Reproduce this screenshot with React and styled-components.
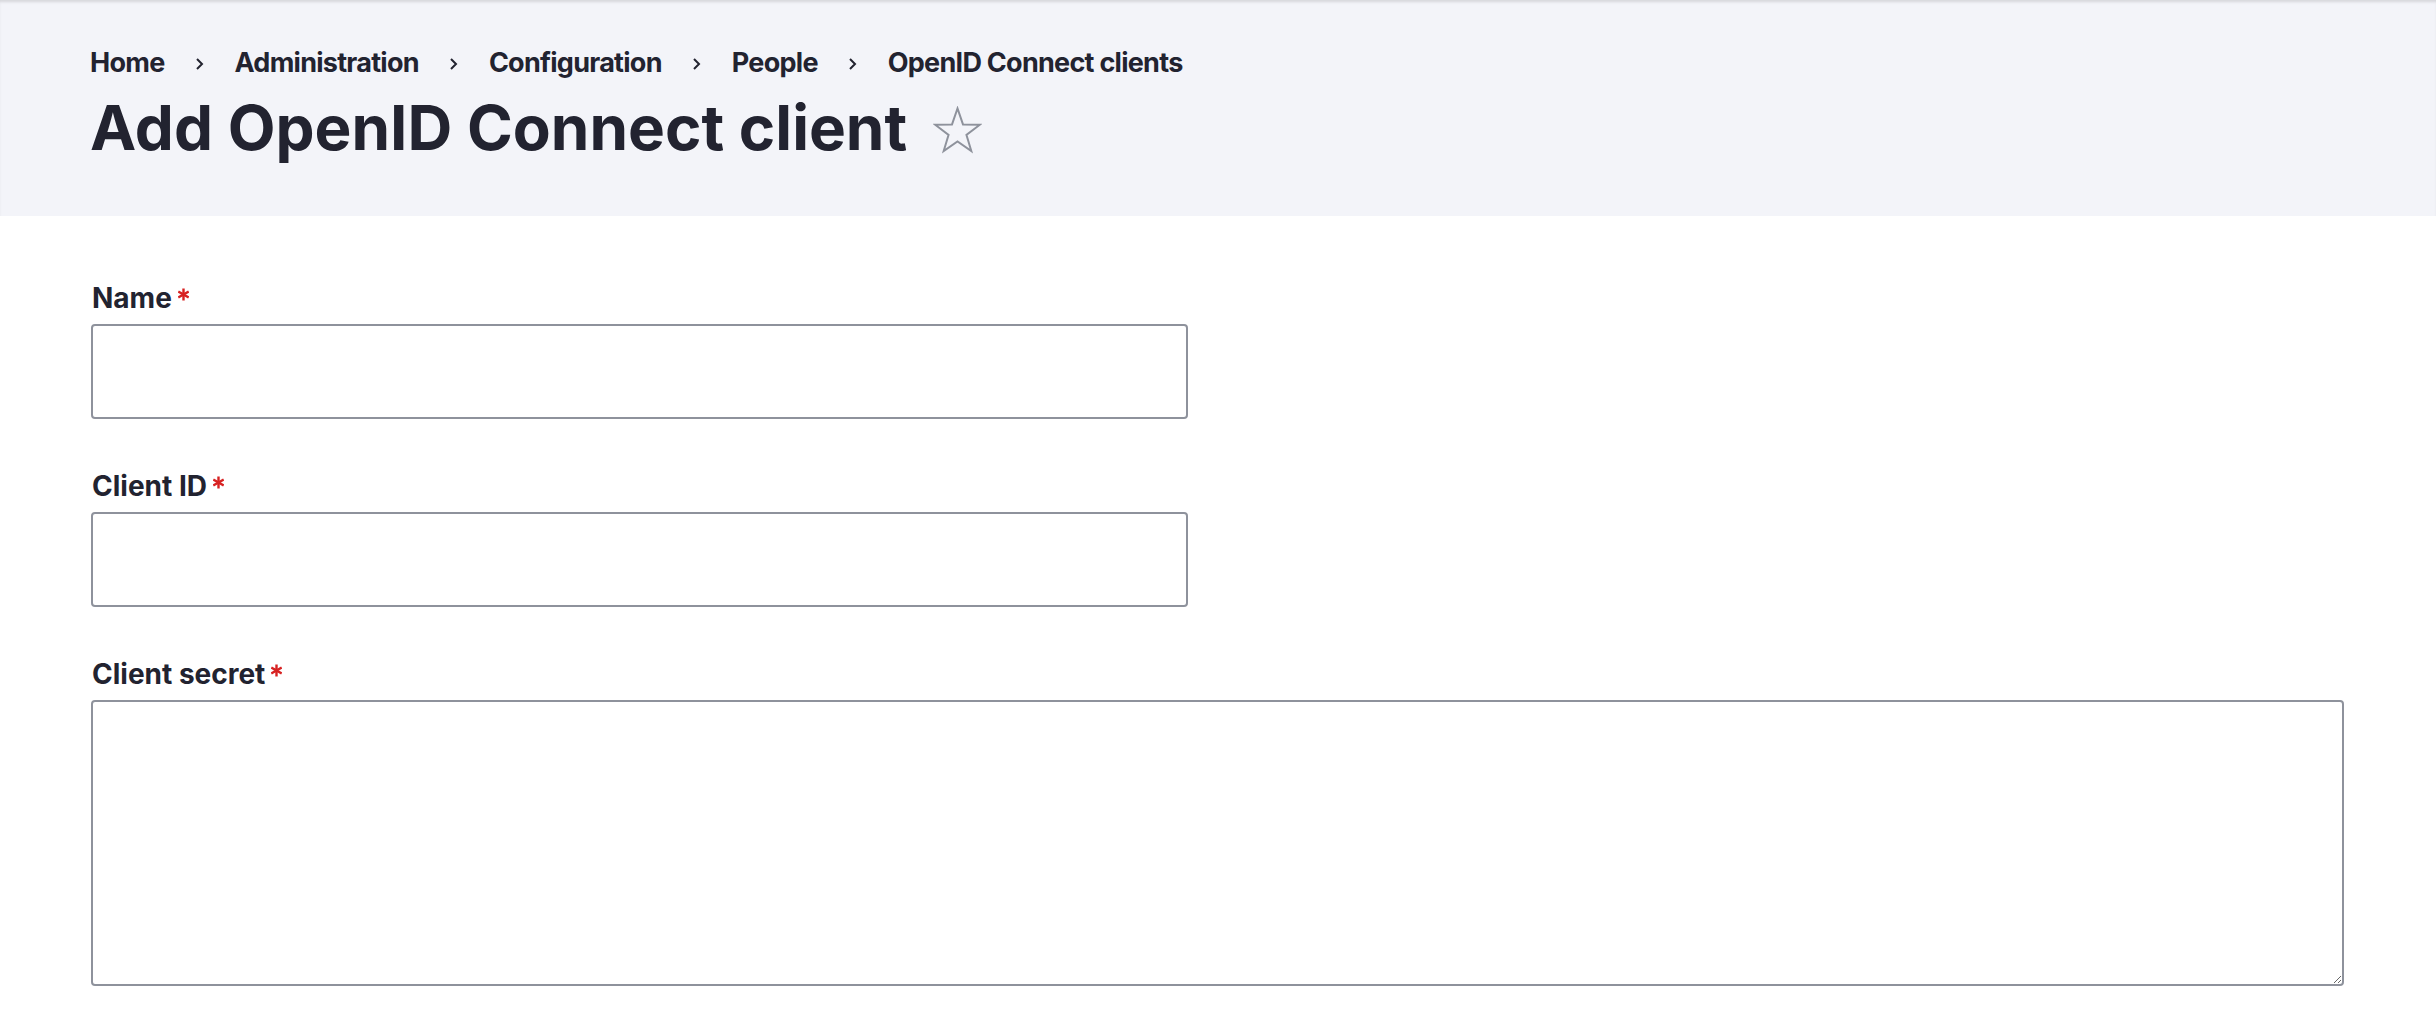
import React from "react";
import styled, { createGlobalStyle } from "styled-components";

const GlobalStyle = createGlobalStyle`
  html, body {
    margin: 0;
    padding: 0;
    background: #ffffff;
  }
  body {
    font-family: Inter, "Noto Sans", "Liberation Sans", sans-serif;
    color: #222330;
  }
`;

const Header = styled.header`
  background: #f3f4f9;
  box-shadow: inset 0 3px 3px -1px rgba(0, 0, 0, 0.12);
  height: 216px;
  box-sizing: border-box;
  padding: 49px 0 0 90px;
`;

const Crumbs = styled.ol`
  display: flex;
  align-items: center;
  gap: 31px;
  list-style: none;
  margin: 0;
  padding: 0;
  font-size: 27px;
  line-height: 27px;
  font-weight: 700;
  letter-spacing: -0.027em;
`;

const Crumb = styled.li`
  display: flex;
  align-items: center;
  gap: 30px;
`;

const Chevron = styled.svg`
  width: 9px;
  height: 14px;
  margin-top: 2px;
`;

const TitleRow = styled.div`
  display: flex;
  align-items: center;
  gap: 26px;
  margin-top: 21px;
`;

const Title = styled.h1`
  margin: 0;
  font-size: 62px;
  line-height: 62px;
  font-weight: 700;
  letter-spacing: 0;
`;

const Star = styled.svg`
  width: 49px;
  height: 48px;
  margin-top: 4px;
`;

const Form = styled.form`
  padding: 68px 0 40px 91px;
  display: flex;
  flex-direction: column;
  gap: 53px;
`;

const Field = styled.div`
  display: flex;
  flex-direction: column;
  gap: 12px;
`;

const Label = styled.label`
  display: flex;
  align-items: flex-start;
  gap: 6px;
  font-size: 28px;
  line-height: 28px;
  font-weight: 700;
  padding-left: 1px;
`;

const Required = styled.svg`
  width: 11px;
  height: 13px;
  margin-top: 4px;
`;

const TextInput = styled.input`
  box-sizing: border-box;
  width: ${(p) => p.$width}px;
  height: 95px;
  border: 2px solid #8e929c;
  border-radius: 4px;
  background: #fff;
  font: inherit;
  font-size: 28px;
  padding: 0 20px;
  outline: none;
`;

const TextArea = styled.textarea`
  box-sizing: border-box;
  width: 2253px;
  height: 286px;
  border: 2px solid #8e929c;
  border-radius: 4px;
  background: #fff;
  font: inherit;
  font-size: 28px;
  padding: 16px 20px;
  outline: none;
  resize: vertical;
`;

const crumbs = ["Home", "Administration", "Configuration", "People", "OpenID Connect clients"];

const Asterisk = () => (
  <Required viewBox="0 0 11 13" aria-hidden="true">
    <g stroke="#d72222" strokeWidth="2.4" strokeLinecap="butt">
      <line x1="5.5" y1="0.5" x2="5.5" y2="12.5" />
      <line x1="0.3" y1="3.5" x2="10.7" y2="9.5" />
      <line x1="0.3" y1="9.5" x2="10.7" y2="3.5" />
    </g>
  </Required>
);

const App = () => {
  return (
    <>
      <GlobalStyle />
      <Header>
        <Crumbs>
          {crumbs.map((c, i) => (
            <Crumb key={c}>
              <span>{c}</span>
              {i < crumbs.length - 1 && (
                <Chevron viewBox="0 0 9 14" aria-hidden="true">
                  <polyline points="2,2 7,7 2,12" fill="none" stroke="#222330" strokeWidth="2" />
                </Chevron>
              )}
            </Crumb>
          ))}
        </Crumbs>
        <TitleRow>
          <Title>Add OpenID Connect client</Title>
          <Star viewBox="0 0 50 48" aria-hidden="true">
            <polygon
              points="25,2 30.6,18.3 47.8,18.6 34.1,29 39.1,45.5 25,35.6 10.9,45.5 15.9,29 2.2,18.6 19.4,18.3"
              fill="none"
              stroke="#8e929c"
              strokeWidth="2"
              strokeLinejoin="miter"
            />
          </Star>
        </TitleRow>
      </Header>
      <Form>
        <Field>
          <Label htmlFor="name">
            <span>Name</span>
            <Asterisk />
          </Label>
          <TextInput id="name" $width={1097} />
        </Field>
        <Field>
          <Label htmlFor="client-id">
            <span>Client ID</span>
            <Asterisk />
          </Label>
          <TextInput id="client-id" $width={1097} />
        </Field>
        <Field>
          <Label htmlFor="client-secret">
            <span>Client secret</span>
            <Asterisk />
          </Label>
          <TextArea id="client-secret" />
        </Field>
      </Form>
    </>
  );
};

export default App;
